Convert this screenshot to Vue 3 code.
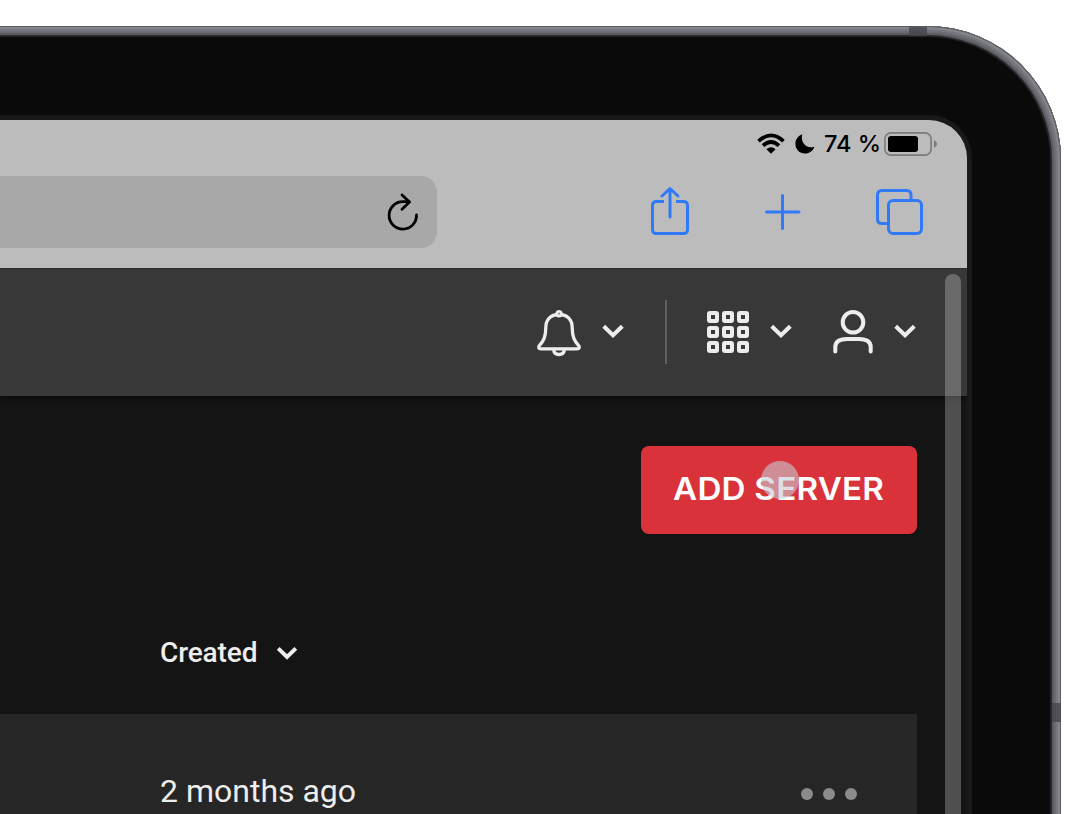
<script setup>
const cells = [0, 1, 2].flatMap((r) => [0, 1, 2].map((c) => ({ x: 2 + c * 15, y: 2 + r * 15 })))
</script>

<template>
  <div class="stage">
    <div class="device">
      <span class="antenna antenna-top"></span>
      <span class="antenna antenna-side"></span>
      <div class="screen">
        <div class="browser">
          <div class="status">
            <svg class="wifi" width="28" height="22" viewBox="0 0 28 22" fill="none" stroke="#000" stroke-width="3.7">
              <path d="M1.5 8.2Q14-3.4 26.5 8.2" />
              <path d="M6 12.7Q14 5.3 22 12.7" />
              <path d="M9.4 16.3Q14 12.3 18.6 16.3L14 20.8Z" fill="#000" stroke="none" />
            </svg>
            <svg class="moon" width="20" height="20" viewBox="0 0 20 20">
              <path d="M7.300 .3C3 1.800 .4 5.500 .4 9.700C.4 15.300 4.500 19.500 10 19.500C14.200 19.500 18 17 19.400 12.700C11.500 15.300 5 8.500 7.300 .3Z" />
            </svg>
            <span class="percent">74 %</span>
            <svg class="battery" width="53" height="24" viewBox="0 0 53 24">
              <rect x=".9" y=".9" width="46.2" height="22.2" rx="6" fill="none" stroke="#7b7b7b" stroke-width="1.6" />
              <rect x="4" y="4" width="30" height="16" rx="3" />
              <path d="M50 8Q53 9.500 53 12Q53 14.500 50 16Z" fill="#7b7b7b" />
            </svg>
          </div>
          <div class="toolbar">
            <div class="address">
              <svg width="32" height="38" viewBox="0 0 32 38" fill="none" stroke="#000" stroke-width="2.8" stroke-linecap="round" stroke-linejoin="round">
                <path d="M29.500 22A13.700 13.700 0 1 1 15.800 8.700H22" />
                <path d="M15 2L22.500 9L15 16.200" />
              </svg>
            </div>
            <div class="actions">
              <svg width="40" height="50" viewBox="0 0 40 50" fill="none" stroke="#3079f8" stroke-width="3" stroke-linecap="round" stroke-linejoin="round">
                <path stroke-linecap="butt" d="M14 15.500H6.500Q2.500 15.500 2.500 19.500V43.500Q2.500 47.500 6.500 47.500H33.500Q37.500 47.500 37.500 43.500V19.500Q37.500 15.500 33.500 15.500H26" />
                <path d="M20 31V3M12 10L20 2.500L28 10" />
              </svg>
              <svg width="36" height="36" viewBox="0 0 36 36" stroke="#3079f8" stroke-width="3" stroke-linecap="round">
                <path d="M17.500 1.500V34.500M1.500 18H34" />
              </svg>
              <svg width="48" height="48" viewBox="0 0 48 48" fill="none" stroke="#3079f8" stroke-width="3">
                <rect x="12.500" y="12.500" width="33" height="33" rx="4.500" />
                <path d="M12 35.500H6Q1.500 35.500 1.500 31V7Q1.500 2.500 6 2.500H30.500Q35 2.500 35 7V12" />
              </svg>
            </div>
          </div>
        </div>

        <header class="appbar">
          <svg class="bell" width="46" height="48" viewBox="0 0 46 48" fill="none" stroke="#ededed" stroke-width="3.300" stroke-linejoin="round">
            <path d="M23 5.500C14.500 5.500 9.800 11 9.800 18.500C9.800 28 7.500 32 3.500 36.300C1.800 38.200 2.600 39.800 5 39.800H41C43.400 39.800 44.200 38.200 42.500 36.300C38.500 32 36.200 28 36.200 18.500C36.200 11 31.500 5.500 23 5.500Z" />
            <path d="M17.700 41Q18.200 45.500 23 45.500Q27.800 45.500 28.300 41" />
            <circle cx="23" cy="4.700" r="2.400" fill="#999" stroke-width="2.600" />
          </svg>
          <svg class="chev bell-chev" width="22" height="14" viewBox="0 0 22 14"><path d="M1.700 2.200L11 11.200L20.300 2.200" /></svg>
          <span class="divider"></span>
          <svg class="grid" width="42" height="42" viewBox="0 0 42 42" fill="none" stroke="#ededed" stroke-width="4">
            <rect v-for="(c, i) in cells" :key="i" :x="c.x" :y="c.y" width="8" height="8" rx="1" />
          </svg>
          <svg class="chev grid-chev" width="22" height="14" viewBox="0 0 22 14"><path d="M1.700 2.200L11 11.200L20.300 2.200" /></svg>
          <svg class="user" width="40" height="46" viewBox="0 0 40 46" fill="none" stroke="#ededed" stroke-width="4">
            <circle cx="20" cy="13.300" r="10.300" />
            <path stroke-linecap="round" d="M2.300 42.500V38C2.300 31.500 8 30 14 30H26C32 30 37.700 31.500 37.700 38V42.500" />
          </svg>
          <svg class="chev user-chev" width="22" height="14" viewBox="0 0 22 14"><path d="M1.700 2.200L11 11.200L20.300 2.200" /></svg>
        </header>

        <main class="content">
          <button class="add"><span class="add-text">ADD SERVER</span><span class="touch"></span></button>
          <div class="heading">
            <span class="created">Created</span>
            <svg class="chev" width="22" height="14" viewBox="0 0 22 14"><path d="M2.200 2.400L11 10.900L19.800 2.400" /></svg>
          </div>
          <div class="row">
            <span class="ago">2 months ago</span>
            <span class="dots"><i></i><i></i><i></i></span>
          </div>
        </main>
        <span class="scrollbar"></span>
      </div>
    </div>
  </div>
</template>

<style>
html, body { margin: 0; background: #fff; overflow: hidden; }
</style>

<style scoped>
* { box-sizing: border-box; }
svg { display: block; flex: none; }
.stage { width: 1089px; height: 814px; padding-top: 26px; overflow: hidden; background: #fff; }
/* The device body runs past the left edge so that only its top and right rims show. */
.device {
  position: relative; width: 1101px; height: 900px; margin-left: -40px; padding: 94px 0 0 40px;
  border-top-right-radius: 134px; background: #0a0a0a;
  box-shadow: inset 0 0 0 1px #5b5c61, inset 0 0 0 3px #85868c, inset 0 0 0 5px #77787e, inset 0 0 0 7px #6b6c72, inset 0 0 0 9px #5b5c61, inset 0 0 0 10px #29292b, inset 0 0 0 11px #222224;
}
.antenna { position: absolute; background: #45464bcc; }
.antenna-top { left: 949px; top: 1px; width: 18px; height: 9px; }
.antenna-side { right: 0; top: 677px; width: 9px; height: 19px; }
.screen { position: relative; width: 967px; height: 800px; border-top-right-radius: 38px; background: #141414; box-shadow: 0 0 0 5px #191919; }
.browser { height: 148px; background: #bcbcbc; border-top-right-radius: 38px; }
.status { display: flex; height: 56px; padding: 12px 30px 0 757px; align-items: flex-start; }
.wifi { margin-top: 1px; }
.moon { margin: 2px 0 0 10px; }
.percent { width: 60px; margin-left: 9px; font: 500 23.5px/24px Inter, sans-serif; white-space: nowrap; color: #000; }
.toolbar { display: flex; height: 72px; }
.address { display: flex; width: 437px; height: 72px; padding: 17px 18px 0 0; justify-content: flex-end; border-radius: 0 16px 16px 0; background: #a8a8a8; }
.actions { display: flex; align-items: flex-start; padding: 10px 0 0 213px; gap: 75px; }
.actions svg:nth-child(2) { margin-top: 8px; }
.actions svg:nth-child(3) { margin-top: 2px; }
.appbar { position: relative; z-index: 1; display: flex; align-items: flex-start; height: 128px; padding-left: 536px; background: #383838; border-top: 1px solid #2a2a2a; box-shadow: 0 2px 6px #0009; clip-path: inset(0 0 -10px 0); }
.chev { fill: none; stroke: #ededed; stroke-width: 4; }
.bell { margin-top: 40px; }
.bell-chev { margin: 55px 0 0 20px; }
.divider { width: 2px; height: 64px; margin: 31px 0 0 41px; background: #606060; }
.grid { margin: 42px 0 0 40px; }
.grid-chev { margin: 55px 0 0 21px; }
.user { margin: 40px 0 0 41px; }
.user-chev { margin: 55px 0 0 21px; }
.content { display: flex; flex-direction: column; padding-top: 50px; }
.add { position: relative; display: flex; align-items: center; justify-content: center; width: 276px; height: 88px; margin-left: 641px; padding: 0 0 2px; border: 0; border-radius: 8px; background: #da323a; color: #fff; }
.add-text { font: 600 31px/40px Inter, sans-serif; letter-spacing: .2px; white-space: nowrap; transform: scaleX(1.07); }
.touch { position: absolute; left: 120px; top: 15px; width: 38px; height: 38px; border-radius: 50%; background: #d0b6c09e; mix-blend-mode: normal; background: rgb(200 202 210 / .6); }
.heading { display: flex; align-items: center; height: 40px; margin-top: 99px; padding-left: 160px; color: #ededed; }
.created { width: 116px; font: 500 28px/40px Roboto, sans-serif; letter-spacing: -.1px; }
.row { display: flex; width: 917px; height: 160px; margin-top: 41px; padding-left: 160px; background: #262626; }
.ago { width: 641px; padding-top: 57px; font: 400 32px/40px Roboto, sans-serif; color: #ededed; }
.dots { display: flex; gap: 10px; padding-top: 74px; }
.dots i { width: 12px; height: 12px; border-radius: 50%; background: #8b8b8b; }
.scrollbar { position: absolute; z-index: 2; right: 6px; top: 154px; width: 16px; height: 640px; border-radius: 8px; background: #ffffff40; }
</style>
